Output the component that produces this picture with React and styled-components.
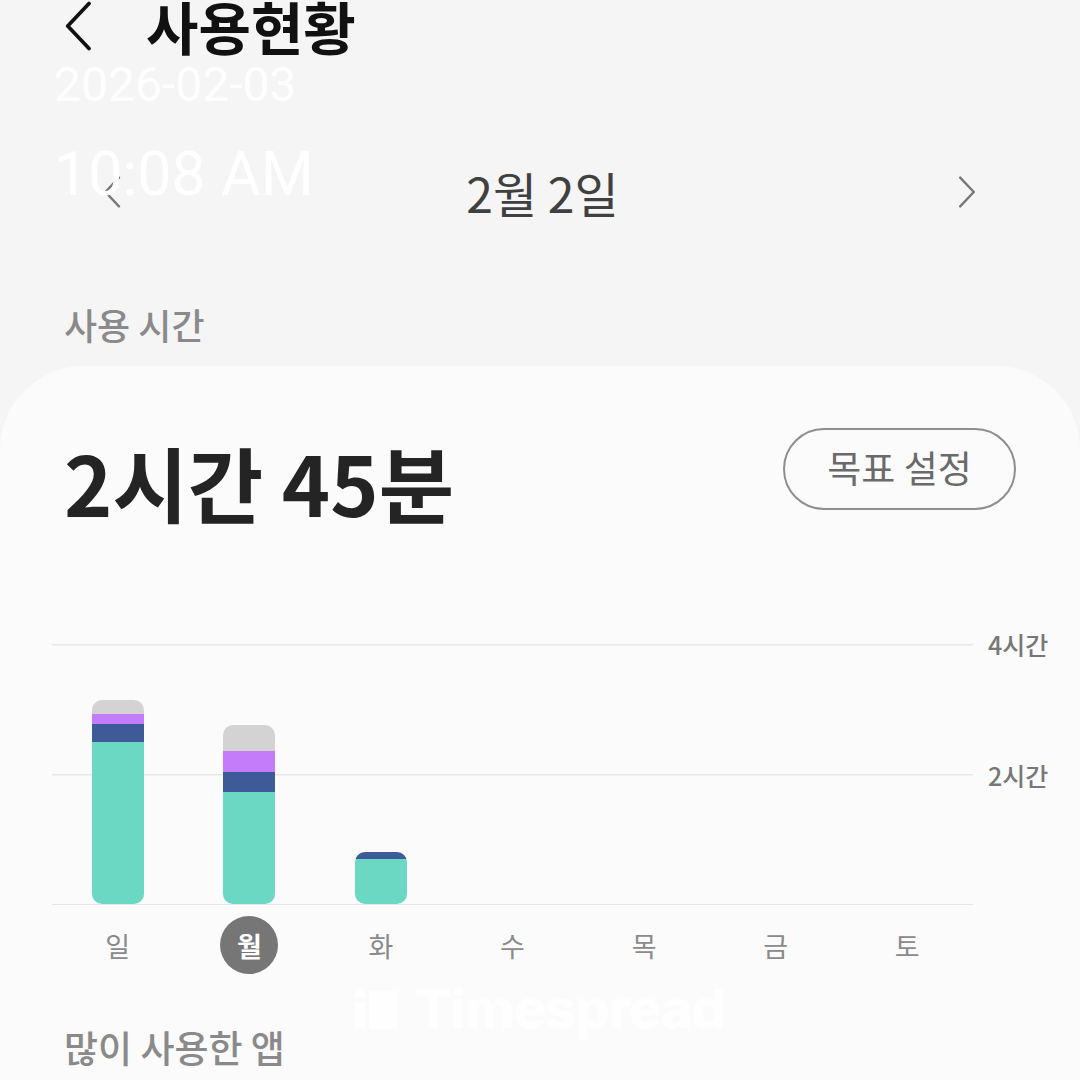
import React from 'react';
import styled, { createGlobalStyle } from 'styled-components';

const GlobalStyle = createGlobalStyle`
  html, body {
    margin: 0;
    padding: 0;
    background: #f5f5f5;
    overflow: hidden;
  }
  body {
    font-family: "Noto Sans CJK KR", "Noto Sans", sans-serif;
  }
`;

const FONT = '"Noto Sans CJK KR", "Noto Sans", sans-serif';

const WEEK = [
  { label: '일', segments: [150, 16, 9, 13] },
  { label: '월', segments: [103, 19, 19, 24], selected: true },
  { label: '화', segments: [42, 6, 0, 0] },
  { label: '수', segments: [] },
  { label: '목', segments: [] },
  { label: '금', segments: [] },
  { label: '토', segments: [] }
];

const SEGMENT_COLORS = ['#6ad8c2', '#3f5a98', '#c57cfb', '#d3d3d3'];
const PX_PER_MIN = 130 / 120;

const Screen = styled.div`
  position: relative;
  width: 1080px;
  height: 1080px;
  display: flex;
  flex-direction: column;
  background: #f5f5f5;
  font-family: ${FONT};
  overflow: hidden;
`;

const Header = styled.header`
  display: flex;
  align-items: center;
  gap: 52px;
  padding-left: 64px;
  margin-top: -1px;
  height: 53px;
`;

const Title = styled.h1`
  margin: 0;
  font-size: 57px;
  line-height: 1;
  font-weight: 700;
  color: #111;
`;

const Stamp = styled.div`
  position: absolute;
  left: 54px;
  top: 61px;
  font-family: Roboto, "Liberation Sans", sans-serif;
  color: rgba(255, 255, 255, 0.95);
  line-height: 1;
  pointer-events: none;
`;

const StampDate = styled.div`
  font-size: 48px;
`;

const StampTime = styled.div`
  font-size: 61px;
  margin-top: 35px;
`;

const DateNav = styled.nav`
  display: flex;
  align-items: center;
  justify-content: space-between;
  height: 80px;
  margin-top: 100px;
  padding: 0 104px 0 103px;
`;

const DateLabel = styled.div`
  font-size: 48px;
  line-height: 1;
  color: #404040;
  margin-left: 6px;
`;

const SectionLabel = styled.div`
  font-size: ${(p) => p.$size}px;
  line-height: 1;
  font-weight: 500;
  color: #8a8a8a;
  padding-left: 64px;
  margin-top: ${(p) => p.$top}px;
`;

const Card = styled.section`
  flex: 1;
  margin-top: 24px;
  background: #fbfbfb;
  border-radius: 84px 84px 0 0;
  display: flex;
  flex-direction: column;
`;

const Headline = styled.div`
  display: flex;
  justify-content: space-between;
  align-items: flex-start;
  padding: 62px 64px 0 64px;
`;

const Total = styled.div`
  margin-top: 13px;
  font-size: 82px;
  line-height: 1;
  font-weight: 700;
  color: #242424;
`;

const GoalButton = styled.button`
  box-sizing: border-box;
  width: 233px;
  height: 82px;
  border: 2px solid #8e8e8e;
  border-radius: 41px;
  background: transparent;
  font-family: ${FONT};
  font-size: 37px;
  color: #6a6a6a;
  padding: 0 0 4px;
`;

const ChartRow = styled.div`
  display: grid;
  grid-template-columns: 921px 1fr;
  margin-top: 121px;
  padding-left: 52px;
`;

const Plot = styled.div`
  height: 261px;
  display: grid;
  grid-template-columns: repeat(7, 1fr);
  align-items: end;
  background:
    linear-gradient(#e8e8e8, #e8e8e8) top / 100% 1.5px no-repeat,
    linear-gradient(#e8e8e8, #e8e8e8) center / 100% 1.5px no-repeat,
    linear-gradient(#e6e6e6, #e6e6e6) bottom / 100% 1.5px no-repeat;
`;

const Column = styled.div`
  display: flex;
  justify-content: center;
`;

const Bar = styled.div`
  width: 52px;
  display: flex;
  flex-direction: column-reverse;
  border-radius: 10px;
  overflow: hidden;
  margin-bottom: 1px;
`;

const Segment = styled.div`
  background: ${(p) => p.$color};
`;

const Axis = styled.div`
  display: flex;
  flex-direction: column;
  justify-content: space-between;
  margin: -15px 0;
  padding-left: 15px;
`;

const AxisLabel = styled.div`
  height: 30px;
  line-height: 30px;
  font-size: 25px;
  font-weight: 500;
  color: #777;
`;

const Days = styled.div`
  display: grid;
  grid-template-columns: repeat(7, 1fr);
  width: 921px;
  margin: 11px 0 0 52px;
`;

const Day = styled.div`
  display: flex;
  justify-content: center;
`;

const DayMark = styled.div`
  width: 58px;
  height: 58px;
  border-radius: 50%;
  display: flex;
  align-items: center;
  justify-content: center;
  font-size: 27px;
  font-weight: ${(p) => (p.$selected ? 700 : 400)};
  color: ${(p) => (p.$selected ? '#fff' : '#8a8a8a')};
  background: ${(p) => (p.$selected ? '#767676' : 'transparent')};
`;

const Watermark = styled.div`
  position: absolute;
  left: 355px;
  top: 976px;
  display: flex;
  align-items: center;
  gap: 18px;
  font-family: Inter, "Liberation Sans", sans-serif;
  font-size: 54px;
  font-weight: 800;
  letter-spacing: -1px;
  color: rgba(255, 255, 255, 0.75);
  pointer-events: none;
`;

const Chevron = ({ dir, size, color, stroke }) => (
  <svg width={size * 0.6} height={size} viewBox="0 0 24 40" fill="none">
    <path
      d={dir === 'left' ? 'M20 2 L3 20 L20 38' : 'M4 2 L21 20 L4 38'}
      stroke={color}
      strokeWidth={stroke}
      strokeLinecap="round"
      strokeLinejoin="round"
    />
  </svg>
);

const WatermarkIcon = () => (
  <svg width="42" height="40" viewBox="0 0 42 40">
    <rect x="0" y="0" width="10" height="9" fill="rgba(255,255,255,0.75)" />
    <rect x="0" y="13" width="10" height="27" fill="rgba(255,255,255,0.75)" />
    <rect x="14" y="2" width="28" height="38" fill="rgba(255,255,255,0.75)" />
  </svg>
);

export default function App() {
  return (
    <Screen>
      <GlobalStyle />
      <Header>
        <Chevron dir="left" size={50} color="#111" stroke={3} />
        <Title>사용현황</Title>
      </Header>

      <DateNav>
        <Chevron dir="left" size={32} color="#777" stroke={3} />
        <DateLabel>2월 2일</DateLabel>
        <Chevron dir="right" size={32} color="#777" stroke={3} />
      </DateNav>

      <SectionLabel $top={74} $size={36}>사용 시간</SectionLabel>

      <Card>
        <Headline>
          <Total>2시간 45분</Total>
          <GoalButton>목표 설정</GoalButton>
        </Headline>

        <ChartRow>
          <Plot>
            {WEEK.map((day) => (
              <Column key={day.label}>
                {day.segments.length > 0 && (
                  <Bar>
                    {day.segments.map((min, i) =>
                      min > 0 ? (
                        <Segment
                          key={i}
                          $color={SEGMENT_COLORS[i]}
                          style={{ height: min * PX_PER_MIN }}
                        />
                      ) : null
                    )}
                  </Bar>
                )}
              </Column>
            ))}
          </Plot>
          <Axis>
            <AxisLabel>4시간</AxisLabel>
            <AxisLabel>2시간</AxisLabel>
            <AxisLabel />
          </Axis>
        </ChartRow>

        <Days>
          {WEEK.map((day) => (
            <Day key={day.label}>
              <DayMark $selected={day.selected}>{day.label}</DayMark>
            </Day>
          ))}
        </Days>

        <SectionLabel $top={55} $size={37}>많이 사용한 앱</SectionLabel>
      </Card>

      <Stamp>
        <StampDate>2026-02-03</StampDate>
        <StampTime>10:08 AM</StampTime>
      </Stamp>

      <Watermark>
        <WatermarkIcon />
        Timespread
      </Watermark>
    </Screen>
  );
}
